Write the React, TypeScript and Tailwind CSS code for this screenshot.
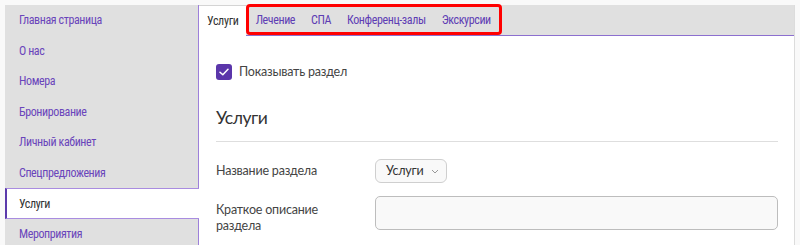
import React from "react";

const sideItems = [
  "Главная страница",
  "О нас",
  "Номера",
  "Бронирование",
  "Личный кабинет",
  "Спецпредложения",
  "Услуги",
  "Мероприятия",
];

const cond = { fontFamily: '"Roboto Condensed", "Roboto", sans-serif' };

export default function App() {
  return (
    <div
      className="w-[800px] h-[245px] overflow-hidden bg-[#f9f9f9] flex pt-[5px] pl-[5px] pr-[5px]"
      style={{ fontFamily: 'Lato, "Open Sans", sans-serif' }}
    >
      <aside className="w-[194px] shrink-0 bg-[#e0e0e0] border-r border-[#9d80da] flex flex-col">
        {sideItems.map((t) => {
          const active = t === "Услуги";
          return active ? (
            <div
              key={t}
              className="h-[31px] shrink-0 bg-white mr-[-1px] border-l-2 border-l-[#5b3aab] border-y border-y-[#a98ce0] flex items-center pl-[12px] text-[12px] text-[#333] tracking-[-0.4px]"
              style={cond}
            >
              {t}
            </div>
          ) : (
            <div
              key={t}
              className="h-[30.5px] shrink-0 flex items-center pl-[14px] text-[12px] text-[#6a45bb] tracking-[-0.4px]"
              style={cond}
            >
              {t}
            </div>
          );
        })}
      </aside>
      <main className="flex-1 bg-white border-r border-[#dcdcdc] flex flex-col">
        <div
          className="relative h-[31px] shrink-0 bg-[#e0e0e0] border-b border-[#8c6fcf] flex items-stretch"
          style={cond}
        >
          <div className="h-[31px] bg-white border-t border-[#d4d4d4] pl-[8px] pr-[7px] flex items-center text-[12px] text-[#333] tracking-[-0.3px]">
            Услуги
          </div>
          <div className="flex items-center text-[12px] text-[#5e3db4] pl-[10px] gap-[16px] tracking-[-0.4px]">
            <span>Лечение</span>
            <span>СПА</span>
            <span>Конференц-залы</span>
            <span>Экскурсии</span>
          </div>
          <div className="absolute left-[47px] top-[-1px] w-[256px] h-[31px] border-[3px] border-[#ff0000] rounded-[4px] pointer-events-none" />
        </div>
        <div className="pl-[17px] pr-[16px] flex flex-col">
          <label className="flex items-center mt-[28px] h-[16px] gap-[7px]">
            <span className="w-[16px] h-[16px] rounded-[3px] bg-[#5b36aa] flex items-center justify-center">
              <svg width="10" height="8" viewBox="0 0 10 8" fill="none">
                <path d="M1 4.2 L3.8 6.8 L9 1.2" stroke="white" strokeWidth="1.5" strokeLinecap="round" strokeLinejoin="round" />
              </svg>
            </span>
            <span className="text-[12.5px] text-[#444] tracking-[-0.2px]">Показывать раздел</span>
          </label>
          <h2 className="mt-[26px] text-[17.5px] leading-[24px] text-[#333] tracking-[-0.5px]">Услуги</h2>
          <div className="mt-[11px] h-px bg-[#dedede]" />
          <div className="mt-[17px] flex items-center">
            <span className="w-[159px] text-[12.5px] text-[#444] tracking-[-0.2px]">Название раздела</span>
            <button className="h-[24px] w-[72px] pl-[10px] rounded-[6px] border border-[#cfcfcf] bg-[#f9f9f9] flex items-center gap-[7px] text-[12.5px] text-[#333] tracking-[-0.2px]">
              Услуги
              <svg width="8" height="5" viewBox="0 0 8 5" fill="none">
                <path d="M1 1 L4 4 L7 1" stroke="#999" strokeWidth="1" />
              </svg>
            </button>
          </div>
          <div className="mt-[13px] flex items-start">
            <span className="w-[159px] text-[12.5px] leading-[16px] text-[#444] pt-[6px] tracking-[-0.2px]">
              Краткое описание
              <br />
              раздела
            </span>
            <div className="flex-1 h-[34px] rounded-[5px] border border-[#bdbdbd] bg-[#f9f9f9]" />
          </div>
        </div>
      </main>
    </div>
  );
}
